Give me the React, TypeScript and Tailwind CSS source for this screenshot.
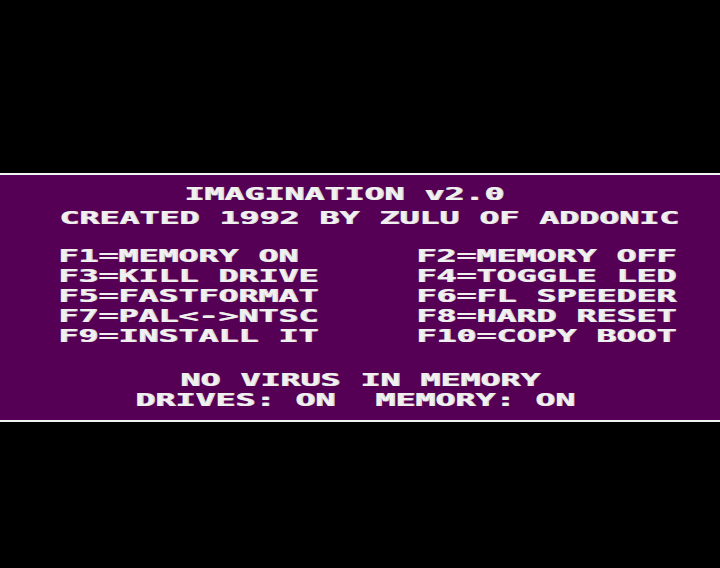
const keys: [string, string][] = [
  ["F1=MEMORY ON", "F2=MEMORY OFF"],
  ["F3=KILL DRIVE", "F4=TOGGLE LED"],
  ["F5=FASTFORMAT", "F6=FL SPEEDER"],
  ["F7=PAL<->NTSC", "F8=HARD RESET"],
  ["F9=INSTALL IT", "F10=COPY BOOT"],
];

function Line({ text, className = "" }: { text: string; className?: string }) {
  return (
    <div
      className={`h-[20px] whitespace-pre font-['DejaVu_Sans_Mono',monospace] font-bold text-[18px] leading-[20px] text-[#f0f0f0] [text-shadow:0.8px_0_0_#d4d4d4] origin-left scale-x-[1.845] ${className}`}
    >
      {text}
    </div>
  );
}

export default function App() {
  return (
    <div className="w-[720px] h-[568px] bg-black flex flex-col overflow-hidden">
      <div className="h-[173px] shrink-0" />

      {/* boot screen band */}
      <div className="h-[249px] shrink-0 border-y-2 border-[#f2f2f2] bg-[#550055] pt-[9px]">
        <Line text="IMAGINATION v2.0" className="ml-[184px]" />
        <Line text="CREATED 1992 BY ZULU OF ADDONIC" className="ml-[59px] mt-[4px]" />

        <div className="mt-[18px]">
          {keys.map(([a, b]) => (
            <div key={a} className="flex">
              <div className="w-[416px] pl-[58px] shrink-0">
                <Line text={a} />
              </div>
              <Line text={b} />
            </div>
          ))}
        </div>

        <Line text="NO VIRUS IN MEMORY" className="ml-[180px] mt-[24px]" />
        <Line text="DRIVES: ON  MEMORY: ON" className="ml-[135px]" />
      </div>

      <div className="flex-1" />
    </div>
  );
}
